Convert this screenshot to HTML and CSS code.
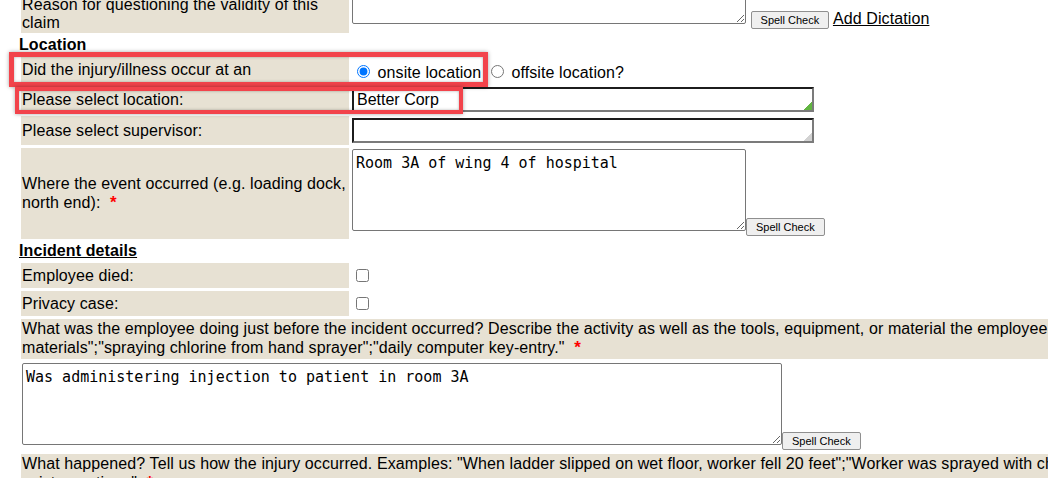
FILE: index.html
```html
<!DOCTYPE html>
<html>
<head>
    <title>Incident Report</title>
    <link rel="stylesheet" href="styles.css">
</head>
<body>
    <div class="page">
        <table class="form">
            <tr>
                <td class="label bottom">Reason for questioning the validity of this claim</td>
                <td class="value first"><textarea class="memo"></textarea> <button type="button" class="spell">Spell Check</button> <a href="#" class="dictation">Add Dictation</a></td>
            </tr>
        </table>

        <div class="section">Location</div>
        <div class="annotated">
            <table class="form">
                <tr>
                    <td class="label">Did the injury/illness occur at an</td>
                    <td class="value radios"><input type="radio" name="site" checked> onsite location <input type="radio" name="site"> offsite location?</td>
                </tr>
                <tr>
                    <td class="label">Please select location:</td>
                    <td class="value"><input type="text" class="lookup picked" value="Better Corp"></td>
                </tr>
                <tr class="roomy">
                    <td class="label">Please select supervisor:</td>
                    <td class="value"><input type="text" class="lookup"></td>
                </tr>
                <tr>
                    <td class="label">Where the event occurred (e.g. loading dock, north end): <span class="req">*</span></td>
                    <td class="value memo-cell"><textarea class="memo">Room 3A of wing 4 of hospital</textarea><button type="button" class="spell">Spell Check</button></td>
                </tr>
            </table>
            <!-- review highlights -->
            <div class="mark mark-site"></div>
            <div class="mark mark-location"></div>
        </div>

        <div class="section underline">Incident details</div>
        <table class="form">
            <tr class="check-row">
                <td class="label">Employee died:</td>
                <td class="value"><input type="checkbox"></td>
            </tr>
            <tr class="check-row">
                <td class="label">Privacy case:</td>
                <td class="value"><input type="checkbox"></td>
            </tr>
            <tr>
                <td class="label wide" colspan="2">What was the employee doing just before the incident occurred? Describe the activity as well as the tools, equipment, or material the employee was using. Be specific. Examples: "climbing a ladder while carrying roofing<br>materials";"spraying chlorine from hand sprayer";"daily computer key-entry." <span class="req">*</span></td>
            </tr>
            <tr>
                <td class="value" colspan="2"><textarea class="memo long">Was administering injection to patient in room 3A</textarea><button type="button" class="spell">Spell Check</button></td>
            </tr>
            <tr>
                <td class="label wide" colspan="2">What happened? Tell us how the injury occurred. Examples: "When ladder slipped on wet floor, worker fell 20 feet";"Worker was sprayed with chlorine when gasket broke during replacement";"Worker developed soreness in<br>wrist over time." <span class="req">*</span></td>
            </tr>
        </table>
    </div>
</body>
</html>
```

FILE: styles.css
```css
body {
    margin: 0;
    font-family: "Liberation Sans", Arial, sans-serif;
    font-size: 16px;
    letter-spacing: 0.1px;
    color: #000;
    background: #fff;
}
.page {
    margin-top: -62px;
    padding-left: 19px;
}
.form {
    border-spacing: 2px 3px;
}
.label {
    width: 326px;
    padding: 1px;
    background-color: #e7e1d3;
    vertical-align: middle;
}
.label.bottom {
    vertical-align: bottom;
}
.label.wide {
    width: auto;
    white-space: nowrap;
    padding: 1px;
}
.value {
    padding: 1px;
    vertical-align: middle;
    white-space: nowrap;
}
.value.first {
    padding-bottom: 4px;
}
.memo-cell {
    padding-bottom: 3px;
}
.radios {
    padding-top: 5px;
    padding-bottom: 1px;
}
.roomy td {
    height: 27px;
}
.check-row td {
    height: 23px;
}
.section {
    font-weight: bold;
}
.underline {
    text-decoration: underline;
}
.req {
    color: #ff0000;
    font-weight: bold;
    font-size: 17px;
    margin-left: 5px;
}
.memo {
    box-sizing: border-box;
    width: 394px;
    height: 82px;
    margin: 0;
    padding: 4px 3px;
    border: 1px solid #767676;
    border-radius: 2px;
    font-family: "DejaVu Sans Mono", monospace;
    font-size: 15px;
    letter-spacing: 0;
    vertical-align: baseline;
}
.memo.long {
    width: 760px;
}
.lookup {
    box-sizing: border-box;
    width: 462px;
    height: 25px;
    margin: 0;
    padding: 1px 3px;
    border-style: solid;
    border-width: 2px;
    border-color: #1c1c1c #7b7b7b #7b7b7b #1c1c1c;
    font-family: "Liberation Sans", Arial, sans-serif;
    font-size: 16px;
    background: #fff linear-gradient(135deg, transparent 50%, #d2d2d2 50%) no-repeat right bottom / 8px 8px;
}
.lookup.picked {
    background-image: linear-gradient(135deg, transparent 50%, #62b542 50%);
}
.spell {
    margin: 0;
    padding: 2px 9px;
    border: 1px solid #8f8f8f;
    border-radius: 2px;
    background-color: #efefef;
    font-family: "Liberation Sans", Arial, sans-serif;
    font-size: 11px;
    letter-spacing: 0;
    color: #000;
}
.dictation {
    color: #000;
}
.annotated {
    position: relative;
}
.mark {
    position: absolute;
    border: solid #f2434b;
    box-shadow: 0 0 4px rgba(0, 0, 0, 0.35), inset 0 0 3px rgba(0, 0, 0, 0.3);
    pointer-events: none;
}
.mark-site {
    left: -10px;
    top: -2px;
    width: 469px;
    height: 25px;
    border-width: 5px;
}
.mark-location {
    left: -4px;
    top: 33px;
    width: 440px;
    height: 19px;
    border-width: 4px;
}
```
